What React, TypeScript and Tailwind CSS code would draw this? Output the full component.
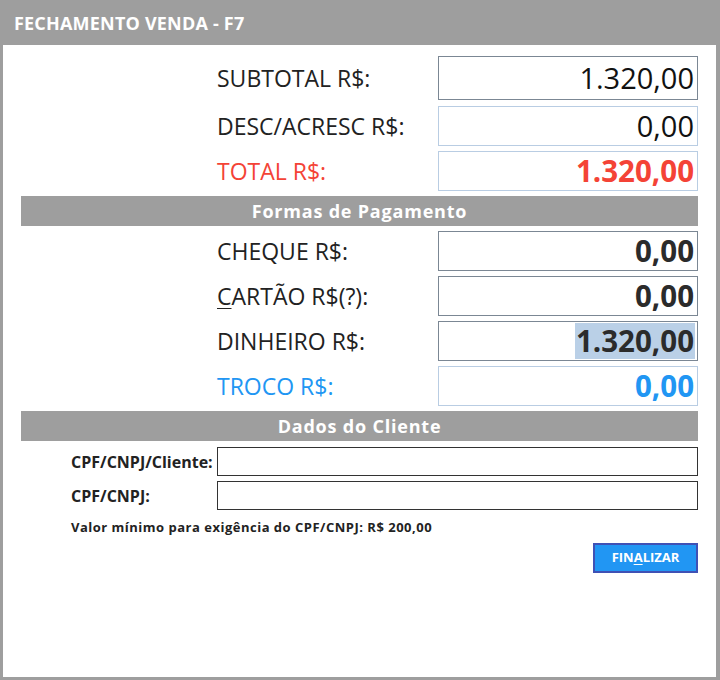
import React from "react";

const font = { fontFamily: '"Open Sans", "Noto Sans", sans-serif' };

type Tone = "plain" | "red" | "blue";

function ValueRow({
  label,
  value,
  tone = "plain",
  bold = false,
  box = "dark",
  tall = false,
  selected = false,
}: {
  label: React.ReactNode;
  value: string;
  tone?: Tone;
  bold?: boolean;
  box?: "dark" | "light";
  tall?: boolean;
  selected?: boolean;
}) {
  const labelColor =
    tone === "red" ? "text-[#f44336]" : tone === "blue" ? "text-[#2196f3]" : "text-[#222]";
  const valueColor =
    tone === "red" ? "text-[#f44336]" : tone === "blue" ? "text-[#2196f3]" : bold ? "text-[#2b2b2b]" : "text-[#111]";
  return (
    <div className={`flex items-center pl-[196px] ${tall ? "h-[44px]" : "h-[40px]"}`}>
      <div className={`flex-1 text-[23px] ${labelColor}`}>{label}</div>
      <div
        className={`w-[260px] h-full flex items-center justify-end pr-[2px] border ${
          box === "dark" ? "border-[#7b8794]" : "border-[#b9cde3]"
        }`}
      >
        <span
          className={`leading-[36px] px-[1px] ${bold ? "font-bold text-[29.5px]" : "text-[29px]"} ${valueColor} ${
            selected ? "bg-[#bad0e7]" : ""
          }`}
        >
          {value}
        </span>
      </div>
    </div>
  );
}

function SectionBar({ children }: { children: React.ReactNode }) {
  return (
    <div className="h-[30px] bg-[#9e9e9e] flex items-center justify-center text-white font-bold text-[18px] tracking-[0.8px]">
      {children}
    </div>
  );
}

export default function App() {
  return (
    <div className="w-[720px] h-[680px] bg-[#9e9e9e] flex flex-col" style={font}>
      {/* title bar */}
      <div className="h-[45px] flex items-center px-[14px] pt-[1px] text-white font-bold text-[18px] tracking-[0.2px]">
        FECHAMENTO VENDA - F7
      </div>

      <div className="flex-1 bg-white ml-[3px] mr-[4px] mb-[3px] pl-[18px] pr-[18px] pt-[11px] flex flex-col">
        <div className="flex flex-col gap-[6px]">
          <ValueRow label="SUBTOTAL R$:" value="1.320,00" tall />
          <ValueRow label="DESC/ACRESC R$:" value="0,00" box="light" />
        </div>
        <div className="mt-[5px] flex flex-col gap-[5px]">
          <ValueRow label="TOTAL R$:" value="1.320,00" tone="red" bold box="light" />
          <SectionBar>Formas de Pagamento</SectionBar>
          <ValueRow label="CHEQUE R$:" value="0,00" bold />
          <ValueRow
            label={
              <>
                <span className="underline underline-offset-[3px] decoration-1">C</span>ARTÃO R$(?):
              </>
            }
            value="0,00"
            bold
          />
          <ValueRow label="DINHEIRO R$:" value="1.320,00" bold selected />
          <ValueRow label="TROCO R$:" value="0,00" tone="blue" bold box="light" />
          <SectionBar>Dados do Cliente</SectionBar>
        </div>

        {/* client fields */}
        <div className="mt-[6px] flex flex-col gap-[5px]">
          <div className="flex items-center">
            <label className="w-[196px] pl-[50px] text-[16px] font-bold text-[#222]">CPF/CNPJ/Cliente:</label>
            <input className="flex-1 h-[29px] border border-[#333] outline-none px-2" />
          </div>
          <div className="flex items-center">
            <label className="w-[196px] pl-[50px] text-[16px] font-bold text-[#222]">CPF/CNPJ:</label>
            <input className="flex-1 h-[29px] border border-[#333] outline-none px-2" />
          </div>
        </div>

        <p className="mt-[8px] pl-[50px] text-[13px] font-bold text-[#222] leading-[18px] tracking-[0.5px]">
          Valor mínimo para exigência do CPF/CNPJ: R$ 200,00
        </p>

        <div className="mt-[7px] flex justify-end">
          <button className="w-[105px] h-[30px] bg-[#2196f3] border-2 border-[#3f51b5] text-white font-bold text-[13px]">
            FIN<span className="underline underline-offset-2">A</span>LIZAR
          </button>
        </div>
      </div>
    </div>
  );
}
